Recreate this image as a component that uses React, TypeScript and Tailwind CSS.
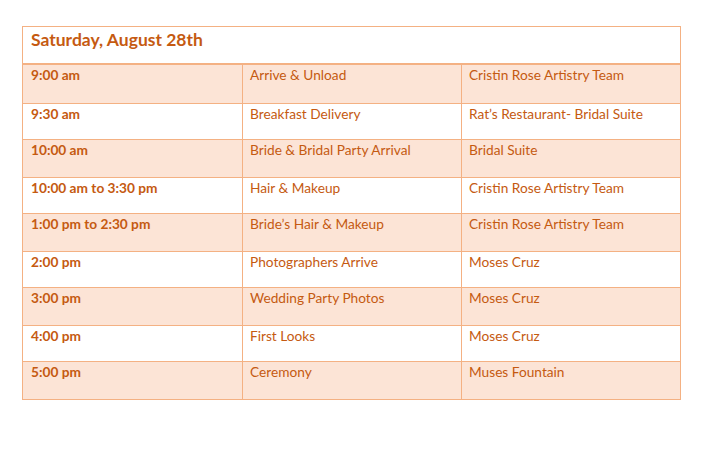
const ROWS = [
  ["9:00 am", "Arrive & Unload", "Cristin Rose Artistry Team"],
  ["9:30 am", "Breakfast Delivery", "Rat’s Restaurant- Bridal Suite"],
  ["10:00 am", "Bride & Bridal Party Arrival", "Bridal Suite"],
  ["10:00 am to 3:30 pm", "Hair & Makeup", "Cristin Rose Artistry Team"],
  ["1:00 pm to 2:30 pm", "Bride’s Hair & Makeup", "Cristin Rose Artistry Team"],
  ["2:00 pm", "Photographers Arrive", "Moses Cruz"],
  ["3:00 pm", "Wedding Party Photos", "Moses Cruz"],
  ["4:00 pm", "First Looks", "Moses Cruz"],
  ["5:00 pm", "Ceremony", "Muses Fountain"],
]

export default function App() {
  return (
    <div className="w-[706px] h-[450px] bg-white pt-[26px] pl-[22px] font-['Lato','Carlito',sans-serif] text-[#c55a11]">
      <div className="w-[659px] border border-[#f4b183]">
        <div className="h-[38px] border-b-2 border-[#f4b183] px-2 pt-[1px] text-[17.5px] font-bold leading-[24px]">
          Saturday, August 28th
        </div>
        {ROWS.map(([time, what, who], i) => (
          <div
            key={time + what}
            className={
              "grid grid-cols-[220px_219px_1fr] text-[13.7px] leading-[18px] " +
              (i % 2 === 0 ? "bg-[#fce4d6] h-[38px]" : "bg-white h-[36px]") +
              (i > 0 ? " border-t border-[#f4b183]" : "")
            }
          >
            <div className="px-2 pt-[1px] font-bold border-r border-[#f4b183]">{time}</div>
            <div className="pl-[7px] pr-2 pt-[1px] border-r border-[#f4b183]">{what}</div>
            <div className="pl-[7px] pr-2 pt-[1px]">{who}</div>
          </div>
        ))}
      </div>
    </div>
  )
}
